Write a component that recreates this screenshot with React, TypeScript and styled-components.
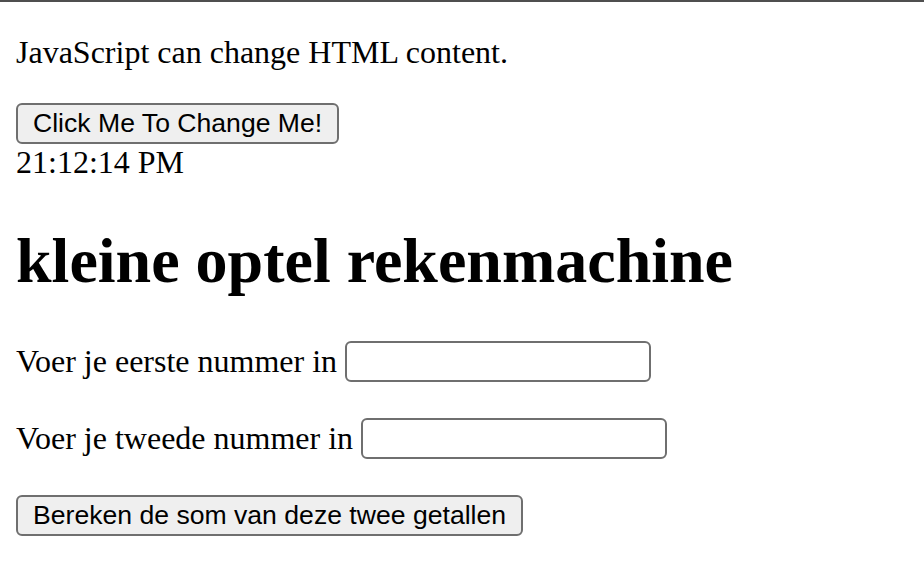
import type { FC } from "react";
import styled, { createGlobalStyle } from "styled-components";

const GlobalStyle = createGlobalStyle`
  html, body {
    margin: 0;
    background: #ffffff;
  }

  body {
    font-family: "Liberation Serif", "Times New Roman", serif;
    font-size: 32px;
    color: #000000;
  }
`;

const App: FC = () => {
  return (
    <>
      <GlobalStyle />
      <Page>
        <Paragraph>JavaScript can change HTML content.</Paragraph>
        <ButtonLine>
          <PlainButton type="button">Click Me To Change Me!</PlainButton>
        </ButtonLine>
        <Clock>21:12:14 PM</Clock>

        <Heading>kleine optel rekenmachine</Heading>

        <FieldRow>
          Voer je eerste nummer in <NumberInput type="text" />
        </FieldRow>
        <FieldRow>
          Voer je tweede nummer in <NumberInput type="text" />
        </FieldRow>
        <ButtonLine>
          <PlainButton type="button">
            Bereken de som van deze twee getallen
          </PlainButton>
        </ButtonLine>
      </Page>
    </>
  );
};

export default App;

const Page = styled.div`
  border-top: 2px solid #4f4f4f;
  padding: 32px 16px 16px;
`;

const Paragraph = styled.p`
  margin: 0 0 32px;
  line-height: 37px;
`;

const ButtonLine = styled.div`
  display: flex;
  height: 41px;
`;

const PlainButton = styled.button`
  height: 41px;
  margin: 0;
  padding: 0 15px;
  font-family: "Liberation Sans", Arial, sans-serif;
  font-size: 26.6px;
  color: #000000;
  background: #efefef;
  border: 2px solid #6f6f6f;
  border-radius: 6px;
  cursor: pointer;
`;

const Clock = styled.div`
  line-height: 37px;
`;

const Heading = styled.h1`
  margin: 43px 0 43px;
  font-size: 64px;
  font-weight: 700;
  line-height: 74px;
`;

const FieldRow = styled.p`
  display: flex;
  align-items: center;
  margin: 0 0 36px;
  height: 41px;
  white-space: pre;
`;

const NumberInput = styled.input`
  box-sizing: border-box;
  width: 306px;
  height: 41px;
  margin: 0;
  padding: 2px 4px;
  font-size: 26px;
  background: #ffffff;
  border: 2px solid #6f6f6f;
  border-radius: 6px;
`;
